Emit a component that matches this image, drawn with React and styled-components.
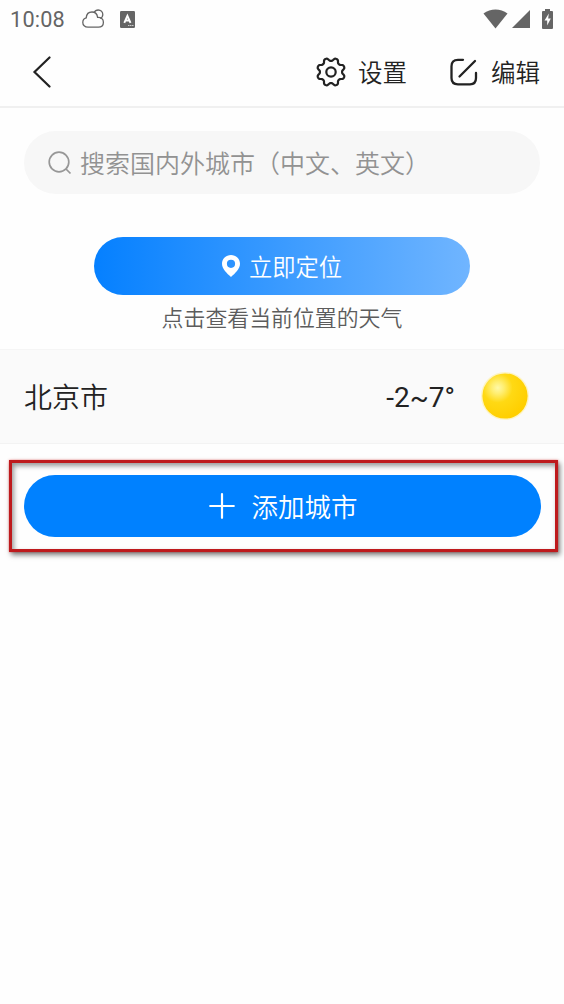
import React from 'react'
import styled, { createGlobalStyle } from 'styled-components'

const GlobalStyle = createGlobalStyle`
  * {
    box-sizing: border-box;
  }
  body {
    margin: 0;
    background: #fefefe;
    font-family: Roboto, 'Noto Sans CJK SC', sans-serif;
    font-weight: 350;
  }
`
const Screen = styled.div`
  width: 564px;
  height: 1004px;
  overflow: hidden;
  color: #222;
`
const StatusBar = styled.header`
  display: flex;
  align-items: center;
  height: 38px;
  padding: 0 11px 0 10px;
  color: #656565;
`
const Clock = styled.span`
  width: 72px;
  padding-top: 2px;
  font-size: 21.7px;
  font-weight: 400;
  line-height: 38px;
  letter-spacing: 0.2px;
`
const StatusGroup = styled.div`
  display: flex;
  align-items: center;
  gap: ${props => props.gap};
  margin-left: ${props => (props.$end ? 'auto' : 0)};
`
const NavBar = styled.nav`
  display: flex;
  align-items: center;
  height: 70px;
  padding: 0 24px 0 32px;
  border-bottom: 2px solid #f0f0f0;
`
const NavActions = styled.div`
  display: flex;
  gap: 43px;
  margin-left: auto;
`
const NavAction = styled.button`
  display: flex;
  align-items: center;
  gap: ${props => props.gap};
  padding: 0;
  border: 0;
  background: none;
  color: inherit;
  font: inherit;
  font-size: 24.5px;
  line-height: 36px;
`
const Label = styled.span`
  padding-top: ${props => props.$down || 0};
  padding-bottom: ${props => props.$up || 0};
`
const SearchBox = styled.div`
  display: flex;
  align-items: center;
  gap: 8px;
  height: 63px;
  margin: 23px 24px 0;
  padding: 0 24px;
  border-radius: 32px;
  background: #f7f7f7;
  color: #929292;
  font-size: 25px;
`
const Locate = styled.section`
  display: flex;
  flex-direction: column;
  align-items: center;
  margin-top: 43px;
`
const Pill = styled.button`
  display: flex;
  align-items: center;
  justify-content: center;
  gap: ${props => props.gap};
  width: ${props => props.width};
  height: ${props => props.height};
  padding: 0;
  border: 0;
  border-radius: 32px;
  background: ${props => props.fill};
  color: #fff;
  font: inherit;
  font-size: ${props => props.size};
`
const AddPill = styled(Pill)`
  padding-left: 2px;
`
const Hint = styled.p`
  margin: 8px 0 0;
  color: #5c5c5c;
  font-size: 21.9px;
  line-height: 32px;
`
const CityRow = styled.div`
  display: flex;
  align-items: center;
  height: 95px;
  margin-top: 14px;
  padding: 0 34px 1px 24px;
  border-top: 1px solid #f5f5f5;
  border-bottom: 1px solid #f3f3f3;
  background: #fafafa;
  font-size: 28px;
`
const CityName = styled.span`
  flex: 1;
`
const Temperature = styled.span`
  margin-right: 25px;
  padding-top: 2px;
  font-weight: 400;
`
const Highlight = styled.div`
  display: flex;
  align-items: center;
  width: 549px;
  height: 92px;
  margin: 16px 0 0 9px;
  padding: 0 0 1px 11.5px;
  border: 3px solid #be1a1d;
  box-shadow: 2px 3px 5px rgba(0, 0, 0, 0.5), inset 2px 3px 5px rgba(0, 0, 0, 0.4),
    0 0 2px rgba(255, 60, 60, 0.6);
`

const CloudIcon = () => (
  <svg width="23" height="20" viewBox="0 0 23 20" fill="none" stroke="currentColor" strokeWidth="1.3">
    <path d="M6 18.2C2.7 18.2.8 16 .8 13.4c0-2.3 1.5-4 3.4-4.5C4.5 5.3 6.9 3 10 3c3.2 0 5.2 2.2 5.6 5.4 3.4-.3 5.8 1.8 5.8 4.8 0 2.9-2 5-5 5z" />
    <path d="M12 3.6C12.9 1.9 14.2 1 16.2 1c2.6 0 4.6 2 4.6 4.5 0 2-1 3.3-2.6 3.9" />
  </svg>
)
const KeyboardIcon = () => (
  <svg width="15" height="17" viewBox="0 0 15 17">
    <rect width="15" height="17" rx="1.2" fill="currentColor" />
    <path d="M4.3 11.8 7.4 4.8l3.1 7M5.3 9.5h4.2" fill="none" stroke="#fff" strokeWidth="1.9" />
    <path d="M8 14.5h6" stroke="#ccc" strokeWidth="1.2" strokeDasharray="1.5 .5" />
  </svg>
)
const WifiIcon = () => (
  <svg width="25" height="20" viewBox="0 0 25 20">
    <path d="M.5 4.5C7.5-.8 17.5-.8 24.5 4.5L12.5 19.5z" fill="currentColor" />
  </svg>
)
const SignalIcon = () => (
  <svg width="18" height="18" viewBox="0 0 18 18">
    <path d="M0 18 18 0v18z" fill="currentColor" />
  </svg>
)
const BatteryIcon = () => (
  <svg width="11" height="20" viewBox="0 0 11 20">
    <path d="M3 0h5v2h2q1 0 1 1v16q0 1-1 1H1q-1 0-1-1V3q0-1 1-1h2z" fill="currentColor" />
    <path d="M6.8 4.5 2.5 11.5h2.7v5L8.8 9.5H6.2z" fill="#fff" />
  </svg>
)
const BackIcon = () => (
  <svg width="19" height="32" viewBox="0 0 19 32" fill="none" stroke="#222" strokeWidth="2.2">
    <path d="M17.5 1.5 2.5 16l15 14.5" strokeLinecap="round" />
  </svg>
)

// closed outline whose radius swells eight times around the hub
const gearPath = Array.from({ length: 144 }, (_, i) => {
  const angle = (i / 144) * Math.PI * 2
  const wave = Math.tanh(1.5 * Math.cos(8 * angle - Math.PI)) / Math.tanh(1.5)
  const r = 12.6 + wave * 1.5
  return `${i ? 'L' : 'M'}${(16 + r * Math.cos(angle)).toFixed(2)} ${(16 + r * Math.sin(angle)).toFixed(2)}`
}).join('')

const GearIcon = () => (
  <svg width="32" height="32" viewBox="0 0 32 32" fill="none" stroke="#222" strokeWidth="2.2">
    <path d={`${gearPath}Z`} strokeLinejoin="round" />
    <circle cx="16" cy="16" r="4.7" />
  </svg>
)
const EditIcon = () => (
  <svg width="28" height="28" viewBox="0 0 28 28" fill="none" stroke="#222" strokeWidth="2.3">
    <path d="M13 1.8H8Q1.5 1.8 1.5 8.3V20Q1.5 26.3 8 26.3H20Q26 26.3 26 20V15" strokeLinecap="round" />
    <path d="M9.5 18.5 25 3" strokeLinecap="round" />
  </svg>
)
const SearchIcon = () => (
  <svg width="24" height="24" viewBox="0 0 24 24" fill="none" stroke="#979797" strokeWidth="1.7">
    <circle cx="11" cy="11" r="9.8" />
    <path d="m18 18 4.5 4.5" />
  </svg>
)
const PinIcon = () => (
  <svg width="18" height="22" viewBox="0 0 18 22">
    <path
      d="M9 0C4 0 0 3.9 0 8.8 0 14 5 18.5 9 22c4-3.5 9-8 9-13.2C18 3.9 14 0 9 0zm0 4.7a4.1 4.1 0 1 1 0 8.2 4.1 4.1 0 0 1 0-8.2z"
      fill="currentColor"
      fillRule="evenodd"
    />
  </svg>
)
const PlusIcon = () => (
  <svg width="26" height="26" viewBox="0 0 26 26" stroke="currentColor" strokeWidth="2.2" strokeLinecap="round">
    <path d="M13 1.2v23.6M1.2 13h23.6" />
  </svg>
)
const SunIcon = () => (
  <svg width="50" height="50" viewBox="0 0 50 50">
    <defs>
      <radialGradient id="sun" cx="34%" cy="32%" r="68%">
        <stop offset="0" stopColor="#fff9a8" />
        <stop offset="0.2" stopColor="#ffee70" />
        <stop offset="0.48" stopColor="#ffd914" />
        <stop offset="1" stopColor="#ffcf00" />
      </radialGradient>
    </defs>
    <circle cx="25" cy="25" r="24" fill="#fff0a0" opacity="0.6" />
    <circle cx="25" cy="25" r="22.6" fill="url(#sun)" />
  </svg>
)

const App = () => (
  <>
    <GlobalStyle />
    <Screen>
      <StatusBar>
        <Clock>10:08</Clock>
        <StatusGroup gap="15px">
          <CloudIcon />
          <KeyboardIcon />
        </StatusGroup>
        <StatusGroup gap="12px" $end>
          <StatusGroup gap="4px">
            <WifiIcon />
            <SignalIcon />
          </StatusGroup>
          <BatteryIcon />
        </StatusGroup>
      </StatusBar>
      <NavBar>
        <BackIcon />
        <NavActions>
          <NavAction gap="11px">
            <GearIcon />
            <Label $down="4px">设置</Label>
          </NavAction>
          <NavAction gap="13px">
            <EditIcon />
            <Label $down="4px">编辑</Label>
          </NavAction>
        </NavActions>
      </NavBar>
      <SearchBox>
        <SearchIcon />
        <Label $up="2px">搜索国内外城市（中文、英文）</Label>
      </SearchBox>
      <Locate>
        <Pill width="376px" height="58px" size="23.3px" gap="9px" fill="linear-gradient(90deg, #0580ff, #70b5ff)">
          <PinIcon />
          <Label $up="1px">立即定位</Label>
        </Pill>
        <Hint>点击查看当前位置的天气</Hint>
      </Locate>
      <CityRow>
        <CityName>北京市</CityName>
        <Temperature>-2~7°</Temperature>
        <SunIcon />
      </CityRow>
      <Highlight>
        <AddPill width="517px" height="62px" size="26.5px" gap="17px" fill="#0081ff">
          <PlusIcon />
          <Label $up="1px">添加城市</Label>
        </AddPill>
      </Highlight>
    </Screen>
  </>
)

export default App
